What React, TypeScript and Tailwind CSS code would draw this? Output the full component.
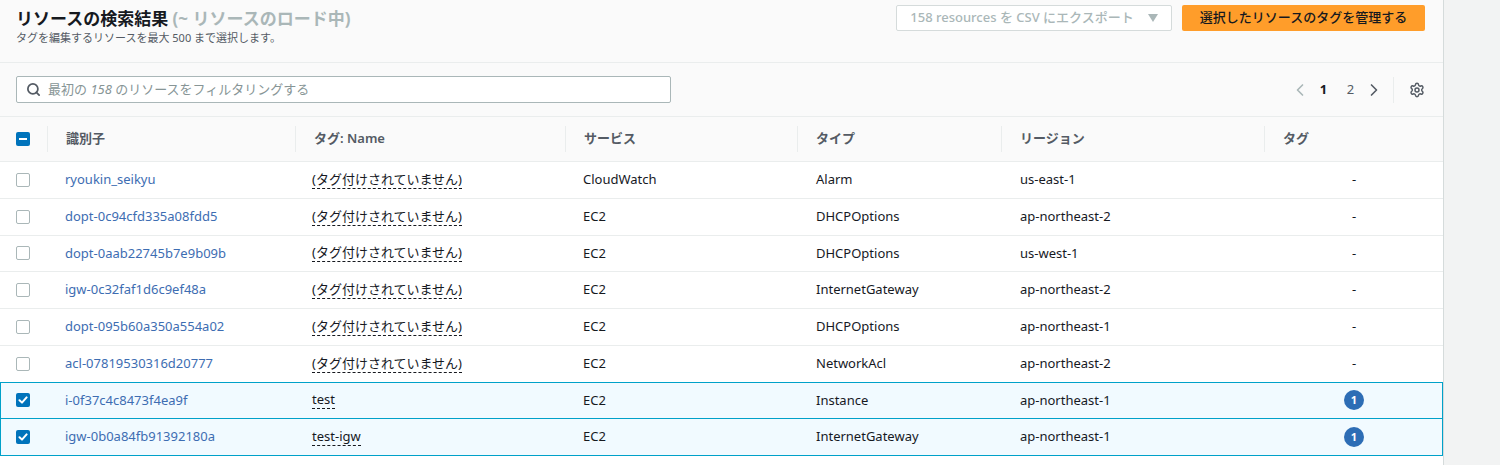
import React from 'react';
import { Search, ChevronLeft, ChevronRight, Settings } from 'lucide-react';

type Row = {
  id: string;
  name: string | null;
  service: string;
  type: string;
  region: string;
  tags: number;
  selected?: boolean;
};

const ROWS: Row[] = [
  { id: 'ryoukin_seikyu', name: null, service: 'CloudWatch', type: 'Alarm', region: 'us-east-1', tags: 0 },
  { id: 'dopt-0c94cfd335a08fdd5', name: null, service: 'EC2', type: 'DHCPOptions', region: 'ap-northeast-2', tags: 0 },
  { id: 'dopt-0aab22745b7e9b09b', name: null, service: 'EC2', type: 'DHCPOptions', region: 'us-west-1', tags: 0 },
  { id: 'igw-0c32faf1d6c9ef48a', name: null, service: 'EC2', type: 'InternetGateway', region: 'ap-northeast-2', tags: 0 },
  { id: 'dopt-095b60a350a554a02', name: null, service: 'EC2', type: 'DHCPOptions', region: 'ap-northeast-1', tags: 0 },
  { id: 'acl-07819530316d20777', name: null, service: 'EC2', type: 'NetworkAcl', region: 'ap-northeast-2', tags: 0 },
  { id: 'i-0f37c4c8473f4ea9f', name: 'test', service: 'EC2', type: 'Instance', region: 'ap-northeast-1', tags: 1, selected: true },
  { id: 'igw-0b0a84fb91392180a', name: 'test-igw', service: 'EC2', type: 'InternetGateway', region: 'ap-northeast-1', tags: 1, selected: true },
];

const COLS = 'grid grid-cols-[47px_248px_270px_232px_204px_263px_180px]';

// small AWS-style checkbox
const Check: React.FC<{ state: 'off' | 'on' | 'mixed' }> = ({ state }) => {
  if (state === 'off') {
    return <span className="block w-[14px] h-[14px] rounded-[2px] border border-[#aab7b8] bg-white" />;
  }
  return (
    <span className="flex items-center justify-center w-[14px] h-[14px] rounded-[2px] bg-[#0073bb]">
      {state === 'on' ? (
        <svg width="10" height="10" viewBox="0 0 10 10">
          <path d="M1.5 5.2 L4 7.6 L8.6 2.4" fill="none" stroke="white" strokeWidth="2" strokeLinecap="round" strokeLinejoin="round" />
        </svg>
      ) : (
        <span className="block w-[8px] h-[2px] bg-white" />
      )}
    </span>
  );
};

const HeadCell: React.FC<{ children: React.ReactNode }> = ({ children }) => (
  <div className="flex items-center h-full">
    <div className="flex items-center h-[26px] border-l border-[#eaeded] pl-[18px] w-full">{children}</div>
  </div>
);

export default function App() {
  return (
    <div
      className="flex w-[1500px] h-[465px] overflow-hidden bg-[#f2f3f3] text-[#16191f]"
      style={{ fontFamily: '"Noto Sans", "Noto Sans CJK JP", sans-serif' }}
    >
      <div className="w-[1444px] shrink-0 bg-white border-r border-[#d5dbdb] flex flex-col">
        {/* heading */}
        <div className="h-[63px] bg-[#fafafa] border-b border-[#eaeded] flex justify-between px-4 pt-[5px]">
          <div className="pt-[3px]">
            <h1 className="text-[17px] font-bold leading-[22px]">
              リソースの検索結果 <span className="text-[#aab7b8]">(~ リソースのロード中)</span>
            </h1>
            <p className="text-[11px] leading-[16px] text-[#545b64]">タグを編集するリソースを最大 500 まで選択します。</p>
          </div>
          <div className="flex gap-[10px] pr-[2px]">
            <div className="w-[276px] h-[26px] border border-[#d5dbdb] rounded-[2px] bg-white flex items-center justify-center gap-[14px] text-[13px] font-medium text-[#aab7b8]">
              <span>158 resources を CSV にエクスポート</span>
              <svg width="10" height="8" viewBox="0 0 10 8">
                <path d="M0 0 H10 L5 8 Z" fill="#aab7b8" />
              </svg>
            </div>
            <div className="w-[243px] h-[26px] rounded-[2px] bg-[#ff9d2a] flex items-center justify-center text-[13px] font-medium text-[#16191f]">
              選択したリソースのタグを管理する
            </div>
          </div>
        </div>

        {/* filter bar */}
        <div className="h-[54px] bg-[#fafafa] border-b border-[#eaeded] flex items-center justify-between pl-4 pr-[18px]">
          <div className="w-[655px] h-[27px] border border-[#aab7b8] rounded-[2px] bg-white flex items-center pl-[9px] gap-[7px]">
            <Search size={15} strokeWidth={2.8} color="#545b64" />
            <span className="text-[13px] text-[#879596]">
              最初の <i>158</i> のリソースをフィルタリングする
            </span>
          </div>
          <div className="flex items-center h-[27px]">
            <ChevronLeft size={20} strokeWidth={2} color="#aab7b8" />
            <span className="w-[27px] text-center text-[13px] font-bold text-[#16191f]">1</span>
            <span className="w-[27px] text-center text-[13px] text-[#545b64]">2</span>
            <ChevronRight size={20} strokeWidth={2} color="#545b64" />
            <span className="block h-[26px] w-px bg-[#eaeded] ml-[9px] mr-[15px]" />
            <Settings size={16} strokeWidth={2.2} color="#545b64" />
          </div>
        </div>

        {/* table header */}
        <div className={`${COLS} h-[45px] bg-[#fafafa] border-b border-[#eaeded] text-[13px] font-semibold text-[#545b64]`}>
          <div className="flex items-center pl-4">
            <Check state="mixed" />
          </div>
          <HeadCell>識別子</HeadCell>
          <HeadCell>タグ: Name</HeadCell>
          <HeadCell>サービス</HeadCell>
          <HeadCell>タイプ</HeadCell>
          <HeadCell>リージョン</HeadCell>
          <HeadCell>タグ</HeadCell>
        </div>

        {/* rows */}
        {ROWS.map((r, i) => {
          const nextSelected = ROWS[i + 1]?.selected;
          return (
            <div
              key={r.id}
              className={`${COLS} h-[36.75px] text-[13px] border-b ${
                r.selected
                  ? 'bg-[#f1faff] border-[#00a1c9] shadow-[inset_1px_0_0_#00a1c9,inset_-1px_0_0_#00a1c9]'
                  : nextSelected
                    ? 'border-[#00a1c9]'
                    : 'border-[#eaeded]'
              }`}
            >
              <div className="flex items-center pl-4">
                <Check state={r.selected ? 'on' : 'off'} />
              </div>
              <div className="flex items-center pl-[18px] text-[#3d6db2]">{r.id}</div>
              <div className="flex items-center pl-[17px]">
                <span className="border-b border-dashed border-[#16191f] leading-[17px]">
                  {r.name ?? '(タグ付けされていません)'}
                </span>
              </div>
              <div className="flex items-center pl-[18px]">{r.service}</div>
              <div className="flex items-center pl-[19px]">{r.type}</div>
              <div className="flex items-center pl-[19px]">{r.region}</div>
              <div className="flex items-center justify-center">
                {r.tags > 0 ? (
                  <span className="flex items-center justify-center w-[20px] h-[20px] rounded-full bg-[#2d6db5] text-white text-[11px] font-bold">
                    {r.tags}
                  </span>
                ) : (
                  <span>-</span>
                )}
              </div>
            </div>
          );
        })}
        <div className="flex-1" />
      </div>
    </div>
  );
}
